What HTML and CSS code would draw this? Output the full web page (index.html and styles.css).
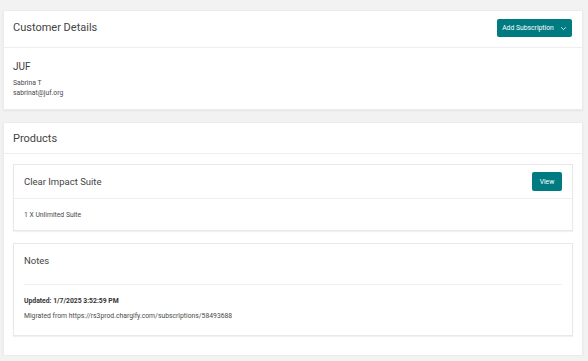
FILE: index.html
```html
<!DOCTYPE html>
<html lang="en">
<head>
    <meta charset="UTF-8">
    <meta name="viewport" content="width=device-width, initial-scale=1.0">
    <title>Customer Details</title>
    <link rel="stylesheet" href="styles.css">
</head>
<body>

    <!-- Customer Details -->
    <div class="card customer-card">
        <div class="card-header customer-header">
            <div class="card-title">Customer Details</div>
            <button class="btn btn-add">Add Subscription
                <svg class="chevron" width="7" height="5" viewBox="0 0 7 5"><path d="M1.2 1.3 L3.5 3.6 L5.8 1.3" fill="none" stroke="#ffffff" stroke-width="0.8"/></svg>
            </button>
        </div>
        <div class="card-body customer-body">
            <div class="org-name">JUF</div>
            <div class="small-text">Sabrina T</div>
            <div class="small-text">sabrinat@juf.org</div>
        </div>
    </div>

    <!-- Products -->
    <div class="card products-card">
        <div class="card-header products-header">
            <div class="card-title">Products</div>
        </div>
        <div class="card-body products-body">
            <div class="inner-card product">
                <div class="inner-header">
                    <div class="inner-title">Clear Impact Suite</div>
                    <button class="btn btn-view">View</button>
                </div>
                <div class="inner-body small-text">1 X Unlimited Suite</div>
            </div>

            <div class="inner-card notes">
                <div class="inner-title notes-title">Notes</div>
                <hr class="notes-rule">
                <div class="small-text updated">Updated: 1/7/2025 3:52:59 PM</div>
                <div class="small-text">Migrated from https://rs3prod.chargify.com/subscriptions/58493688</div>
            </div>
        </div>
    </div>

</body>
</html>
```

FILE: styles.css
```css
/* General Reset */
* {
    margin: 0;
    padding: 0;
    box-sizing: border-box;
    font-family: Roboto, "Liberation Sans", Arial, sans-serif;
}

body {
    background-color: #f2f2f2;
    color: #333333;
    padding: 10px 5px 0 3px;
}

/* Cards */
.card {
    background-color: #ffffff;
    border: 1px solid #ececec;
    box-shadow: 0 1px 2px rgba(0, 0, 0, 0.06);
}

.card-header {
    display: flex;
    justify-content: space-between;
    align-items: center;
    height: 37px;
    padding: 0 10px 0 9px;
    border-bottom: 1px solid #eeeeee;
}

.customer-header {
    padding-bottom: 3px;
}

.card-title {
    font-size: 11px;
    color: #444444;
}

.customer-card {
    height: 100px;
}

.customer-body {
    padding: 13px 9px;
}

.org-name {
    font-size: 10px;
    color: #3a3a3a;
    margin-bottom: 6px;
}

.small-text {
    font-size: 6.8px;
    line-height: 10px;
    color: #4a4a4a;
}

/* Buttons */
.btn {
    display: flex;
    align-items: center;
    justify-content: center;
    background-color: #007b82;
    color: #ffffff;
    border: none;
    border-radius: 2px;
    font-size: 6.8px;
    cursor: pointer;
}

.btn-add {
    width: 75px;
    height: 18px;
    gap: 6px;
}

.chevron {
    margin-top: 1px;
}

.btn-view {
    width: 30px;
    height: 19px;
}

/* Products */
.products-card {
    margin-top: 12px;
    height: 234px;
}

.products-header {
    height: 31px;
}

.products-body {
    padding: 10px 9px 0 9px;
}

.inner-card {
    border: 1px solid #e8e8e8;
    box-shadow: 0 1px 1px rgba(0, 0, 0, 0.05);
}

.inner-header {
    display: flex;
    justify-content: space-between;
    align-items: center;
    height: 34px;
    padding: 0 10px 0 10px;
    border-bottom: 1px solid #eeeeee;
}

.inner-title {
    font-size: 9.5px;
    color: #444444;
}

.product .inner-body {
    height: 31px;
    padding: 11px 10px 0 10px;
}

.notes {
    margin-top: 12px;
    height: 93px;
    padding: 12px 10px 0 10px;
}

.notes-title {
    line-height: 10px;
}

.notes-rule {
    border: none;
    border-top: 1px solid #eeeeee;
    margin: 18px 0 11px 0;
}

.updated {
    font-weight: bold;
    color: #333333;
    margin-bottom: 5px;
}
```
